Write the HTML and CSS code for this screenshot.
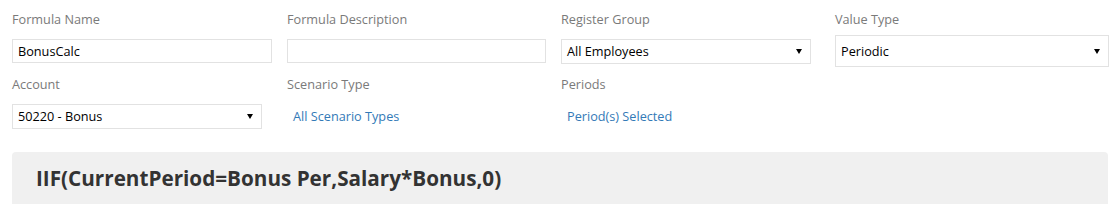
FILE: index.html
```html
<!DOCTYPE html>
<html>
<head>
<meta charset="utf-8">
<link rel="stylesheet" href="styles.css">
</head>
<body>
<div class="page">
  <div class="grid">
    <div class="field">
      <div class="label">Formula Name</div>
      <div class="ctl"><div class="input w260">BonusCalc</div></div>
    </div>
    <div class="field">
      <div class="label">Formula Description</div>
      <div class="ctl"><div class="input w259"></div></div>
    </div>
    <div class="field">
      <div class="label">Register Group</div>
      <div class="ctl"><div class="select w250"><span>All Employees</span><span class="caret"></span></div></div>
    </div>
    <div class="field">
      <div class="label">Value Type</div>
      <div class="ctl"><div class="select tall w274"><span>Periodic</span><span class="caret"></span></div></div>
    </div>
    <div class="field">
      <div class="label">Account</div>
      <div class="ctl"><div class="select w250"><span>50220 - Bonus</span><span class="caret"></span></div></div>
    </div>
    <div class="field">
      <div class="label">Scenario Type</div>
      <div class="ctl"><a class="link">All Scenario Types</a></div>
    </div>
    <div class="field">
      <div class="label">Periods</div>
      <div class="ctl"><a class="link">Period(s) Selected</a></div>
    </div>
    <div class="field"></div>
  </div>
  <div class="panel">
    <div class="formula">IIF(CurrentPeriod=Bonus Per,Salary*Bonus,0)</div>
  </div>
</div>
</body>
</html>
```

FILE: styles.css
```css
html, body {
  margin: 0;
  padding: 0;
  background: #ffffff;
  overflow: hidden;
}
body {
  font-family: "Open Sans", "Noto Sans", sans-serif;
  font-size: 12.7px;
  color: #000;
}
.page {
  padding: 9px 10px 0 12px;
}
.grid {
  display: grid;
  grid-template-columns: 275px 274px 274px 274px;
  row-gap: 7px;
}
.field {
  display: flex;
  flex-direction: column;
  gap: 6px;
}
.label {
  height: 20px;
  line-height: 20px;
  color: #7a7a7a;
}
.ctl {
  height: 32px;
  display: flex;
  align-items: center;
}
.input, .select {
  box-sizing: border-box;
  height: 24px;
  border: 1px solid #e2e2e2;
  background: #fff;
  padding: 0 5px;
  display: flex;
  align-items: center;
  line-height: 22px;
}
.select {
  height: 25px;
  padding: 0 8px 0 5px;
}
.select.tall {
  height: 32px;
}
.caret {
  margin-left: auto;
  width: 0;
  height: 0;
  border-left: 3.5px solid transparent;
  border-right: 3.5px solid transparent;
  border-top: 5px solid #000;
}
.w260 { width: 260px; }
.w259 { width: 259px; }
.w250 { width: 250px; }
.w274 { width: 274px; }
.link {
  color: #337ab7;
  padding-left: 6px;
  text-decoration: none;
}
.panel {
  margin-top: 20px;
  background: #f0f0f0;
  border-radius: 4px 4px 0 0;
  height: 52px;
  padding: 12px 24px 0;
  box-sizing: border-box;
}
.formula {
  font-weight: bold;
  font-size: 20.7px;
  line-height: 28px;
  color: #333;
}
```
